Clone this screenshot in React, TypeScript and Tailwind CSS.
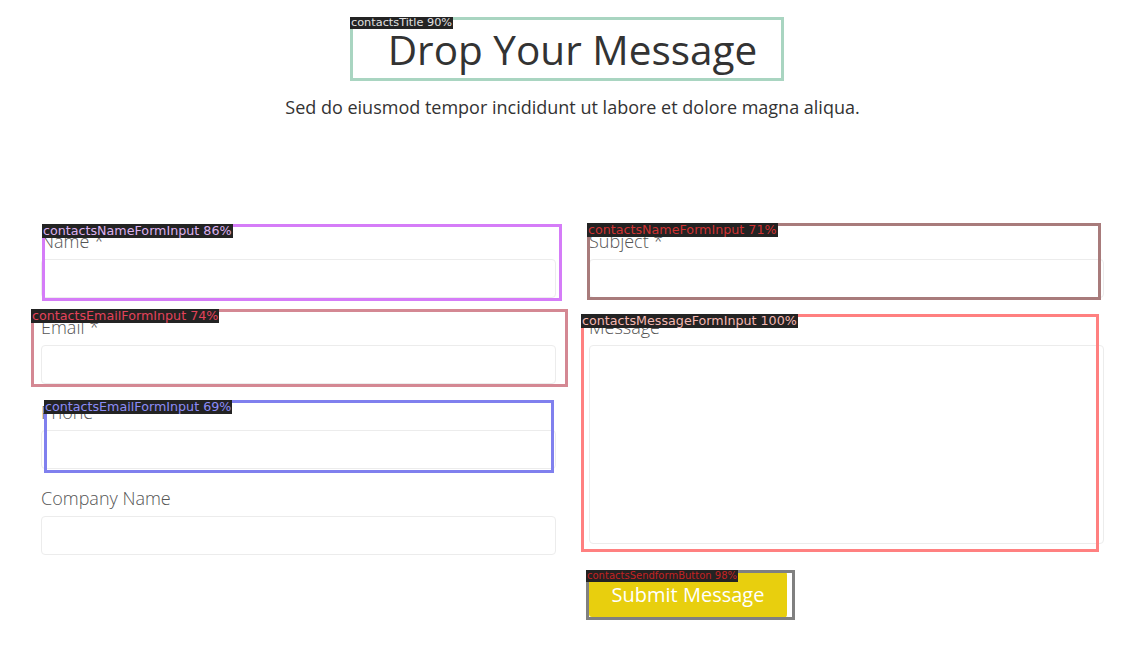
import React from 'react';

type Field = {
  label: string;
  tall?: boolean;
};

const leftFields: Field[] = [
  { label: 'Name *' },
  { label: 'Email *' },
  { label: 'Phone' },
  { label: 'Company Name' },
];

const rightFields: Field[] = [
  { label: 'Subject *' },
  { label: 'Message', tall: true },
];

// detection overlay boxes drawn on top of the page
const Tag: React.FC<{
  name: string;
  box: string;
  text: string;
  size: string;
}> = ({ name, box, text, size }) => (
  <div className={`absolute pointer-events-none ${box}`}>
    <span
      className={`absolute -left-[3px] -top-[3px] bg-[#232323] px-[1px] whitespace-nowrap font-['DejaVu_Sans',sans-serif] ${size} ${text}`}
    >
      {name}
    </span>
  </div>
);

const FormField: React.FC<{ field: Field }> = ({ field }) => (
  <div className="mb-[16.5px]">
    <label className="block text-[18px] leading-[24px] font-light text-[#555]">
      {field.label}
    </label>
    {field.tall ? (
      <textarea className="mt-[6px] block w-full h-[199px] rounded-[4px] border border-[#ececec] bg-white resize-none outline-none" />
    ) : (
      <input className="mt-[6px] block w-full h-[39px] rounded-[4px] border border-[#ececec] bg-white outline-none" />
    )}
  </div>
);

const App: React.FC = () => {
  return (
    <div className="relative min-h-[658px] w-full bg-white font-['Open_Sans',sans-serif] text-[#333] overflow-hidden">
      {/* Header */}
      <div className="pt-[25px] pl-[20px] text-center">
        <h1 className="text-[40.5px] leading-[50px] font-normal text-[#333]">Drop Your Message</h1>
        <p className="mt-[20px] text-[18px] leading-[24px] text-[#333]">
          Sed do eiusmod tempor incididunt ut labore et dolore magna aliqua.
        </p>
      </div>

      {/* Form */}
      <div className="mt-[110px] pl-[41px] flex gap-[33px]">
        <div className="w-[515px]">
          {leftFields.map((f) => (
            <FormField key={f.label} field={f} />
          ))}
        </div>
        <div className="w-[515px]">
          {rightFields.map((f) => (
            <FormField key={f.label} field={f} />
          ))}
          <button className="mt-[12px] w-[200px] h-[45px] rounded-[3px] bg-[#e8cf0e] text-white text-[20px] leading-[45px] border-r-2 border-white">
            Submit Message
          </button>
        </div>
      </div>

      {/* Overlays */}
      <Tag name="contactsTitle 90%" size="text-[11.3px] leading-[12px]" box="left-[350px] top-[17px] w-[434px] h-[64px] border-[3px] border-[#a9d5c1]" text="text-[#e0e0e0]" />
      <Tag name="contactsNameFormInput 86%" size="text-[12.7px] leading-[14px]" box="left-[42px] top-[224px] w-[520px] h-[77px] border-[3px] border-[#d57cf8]" text="text-[#dcb0ee]" />
      <Tag name="contactsNameFormInput 71%" size="text-[12.7px] leading-[14px]" box="left-[587px] top-[223px] w-[514px] h-[77px] border-[3px] border-[#a87b7b]" text="text-[#d03232]" />
      <Tag name="contactsEmailFormInput 74%" size="text-[12.7px] leading-[14px]" box="left-[31px] top-[309px] w-[537px] h-[78px] border-[3px] border-[#d48893]" text="text-[#e2425a]" />
      <Tag name="contactsMessageFormInput 100%" size="text-[12.7px] leading-[14px]" box="left-[581px] top-[314px] w-[518px] h-[238px] border-[3px] border-[#ff8080]" text="text-[#f4b8b2]" />
      <Tag name="contactsEmailFormInput 69%" size="text-[12.7px] leading-[14px]" box="left-[44px] top-[400px] w-[510px] h-[73px] border-[3px] border-[#8080ee]" text="text-[#8c8cf6]" />
      <Tag name="contactsSendformButton 98%" size="text-[10px] leading-[12px]" box="left-[586px] top-[570px] w-[209px] h-[50px] border-[3px] border-[#808080]" text="text-[#c42222]" />
    </div>
  );
};

export default App;
